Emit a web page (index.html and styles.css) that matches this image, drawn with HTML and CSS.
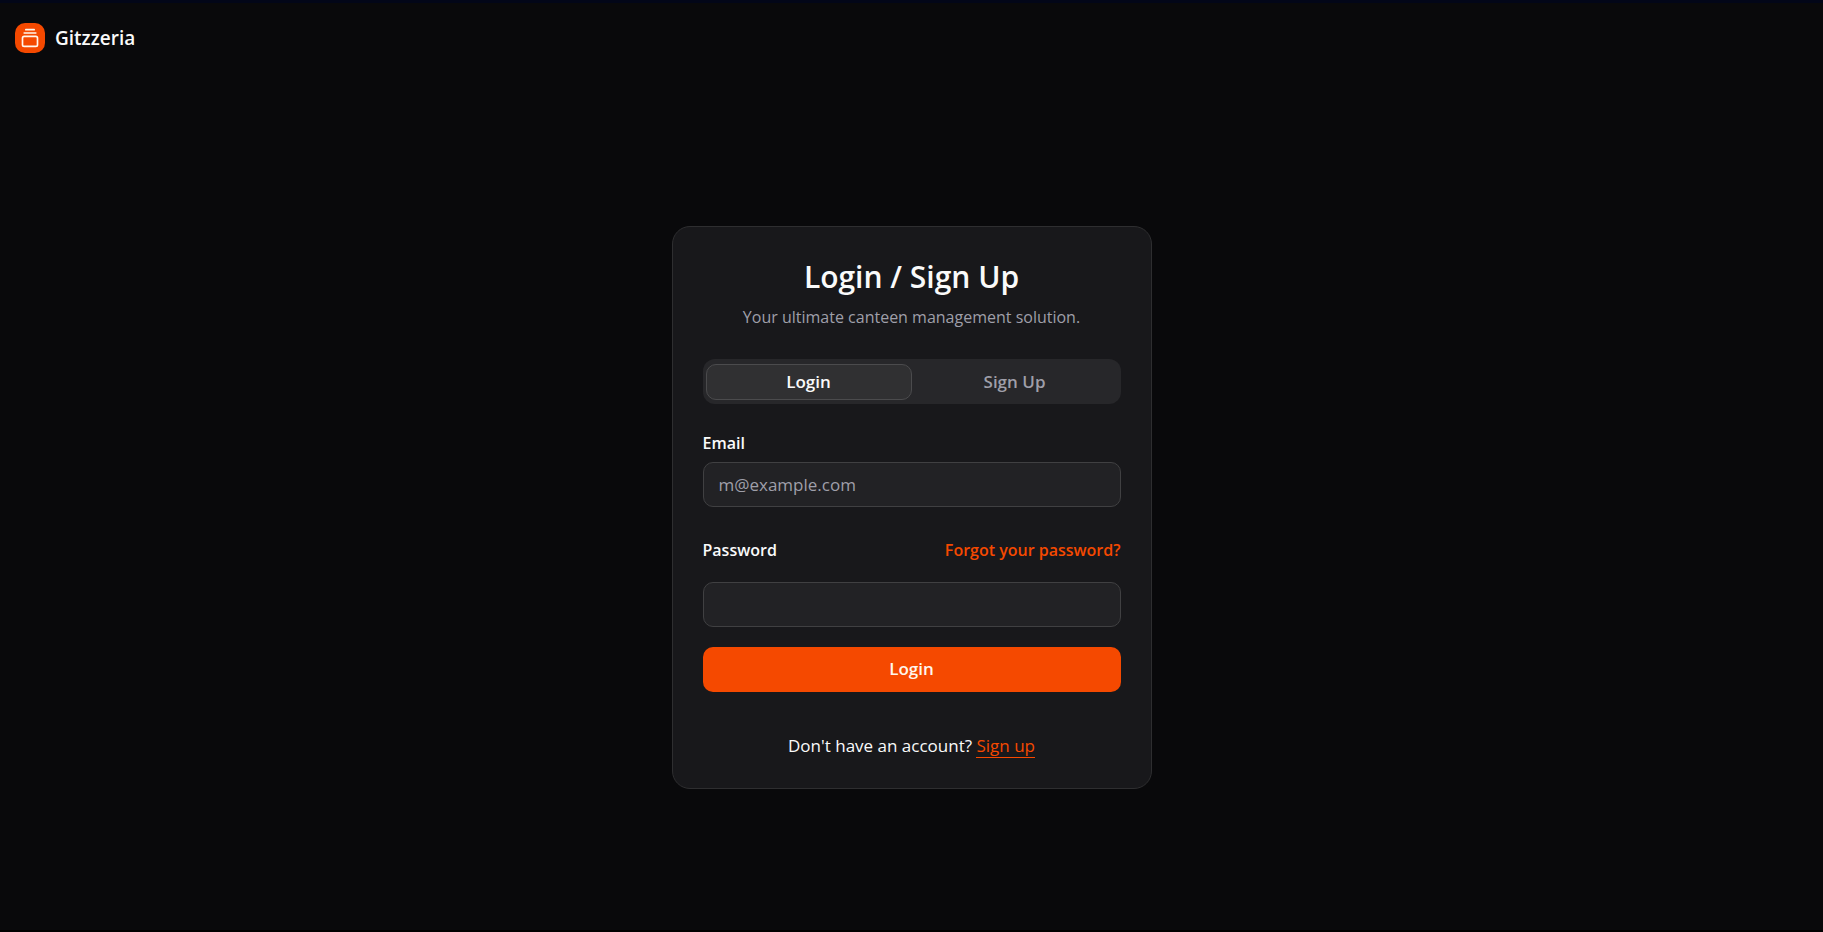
FILE: index.html
```html
<!DOCTYPE html>
<html lang="en">
<head>
  <meta charset="utf-8">
  <meta name="viewport" content="width=device-width, initial-scale=1">
  <title>Gitzzeria</title>
  <link rel="stylesheet" href="styles.css">
</head>
<body>
  <header class="header">
    <a class="brand" href="#">
      <span class="brand-mark">
        <svg width="20" height="20" viewBox="0 0 24 24" fill="none" stroke="currentColor" stroke-width="2" stroke-linecap="round" stroke-linejoin="round" aria-hidden="true">
          <path d="M7 2h10"/>
          <path d="M5 6h14"/>
          <rect x="3" y="10" width="18" height="12" rx="2"/>
        </svg>
      </span>
      Gitzzeria
    </a>
  </header>
  <main class="main">
    <section class="card">
      <h1 class="title">Login / Sign Up</h1>
      <p class="subtitle">Your ultimate canteen management solution.</p>
      <div class="tabs" role="tablist">
        <button class="tab tab-active" type="button" role="tab" aria-selected="true">Login</button>
        <button class="tab" type="button" role="tab" aria-selected="false">Sign Up</button>
      </div>
      <form class="form">
        <div class="field">
          <label class="label" for="email">Email</label>
          <input class="input" id="email" type="email" placeholder="m@example.com">
        </div>
        <div class="field field-password">
          <div class="label-row">
            <label class="label" for="password">Password</label>
            <a class="forgot" href="#">Forgot your password?</a>
          </div>
          <input class="input" id="password" type="password">
        </div>
        <button class="submit" type="submit">Login</button>
      </form>
      <p class="footnote">Don't have an account? <a class="signup" href="#">Sign up</a></p>
    </section>
  </main>
</body>
</html>
```

FILE: styles.css
```css
* {
  box-sizing: border-box;
}

body {
  display: flex;
  flex-direction: column;
  min-height: 100vh;
  margin: 0;
  border-top: 3px solid #020618;
  border-bottom: 2px solid #000;
  background: #09090b;
  color: #fafafa;
  font-family: "Open Sans", "Noto Sans", sans-serif;
  font-size: 17px;
  line-height: 24px;
}

button,
input {
  font: inherit;
}

.header {
  padding: 20px 15px 30px;
}

.brand {
  display: inline-flex;
  align-items: center;
  gap: 10px;
  color: inherit;
  font-size: 19px;
  font-weight: 600;
  line-height: 30px;
  text-decoration: none;
}

.brand-mark {
  display: flex;
  align-items: center;
  justify-content: center;
  width: 30px;
  height: 30px;
  border-radius: 10px;
  background: #f54900;
  color: #fff7ed;
}

.main {
  display: flex;
  flex: 1;
  align-items: center;
  justify-content: center;
}

.card {
  width: 100%;
  max-width: 480px;
  padding: 30px;
  border: 1px solid #2e2e30;
  border-radius: 18px;
  background: #18181b;
}

.title {
  margin: 0 0 8px;
  font-size: 30px;
  font-weight: 600;
  line-height: 40px;
  text-align: center;
}

.subtitle {
  margin: 0 0 30px;
  color: #9f9fa9;
  font-size: 16px;
  text-align: center;
}

.tabs {
  display: grid;
  grid-template-columns: 1fr 1fr;
  height: 45px;
  padding: 5px 3px 4px;
  border-radius: 12px;
  background: #27272a;
}

.tab {
  padding: 0;
  border: 1px solid transparent;
  border-radius: 10px;
  background: transparent;
  color: #9f9fa9;
  font-weight: 600;
}

.tab-active {
  border-color: #4b4b4d;
  background: #303032;
  color: #fafafa;
}

.form {
  display: flex;
  flex-direction: column;
  margin-top: 27px;
}

.field {
  display: flex;
  flex-direction: column;
  gap: 7px;
}

.label,
.forgot {
  font-size: 16px;
  font-weight: 600;
}

.label-row {
  display: flex;
  justify-content: space-between;
}

.field-password {
  gap: 20px;
  margin-top: 31px;
}

.forgot,
.signup {
  color: #f54900;
  text-decoration: none;
}

.input {
  width: 100%;
  height: 45px;
  padding: 0 15px;
  border: 1px solid #404042;
  border-radius: 10px;
  background: #222225;
  color: #fafafa;
}

.input::placeholder {
  color: #9f9fa9;
}

.submit {
  height: 45px;
  margin-top: 20px;
  border: 0;
  border-radius: 10px;
  background: #f54900;
  color: #fff7ed;
  font-weight: 600;
}

.footnote {
  margin: 42px 0 0;
  text-align: center;
}

.signup {
  border-bottom: 1px solid;
}
```
